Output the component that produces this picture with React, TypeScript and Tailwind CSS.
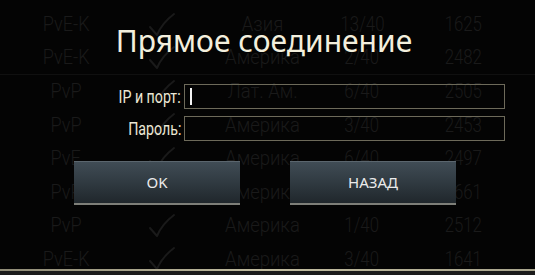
import React from "react";

const rows = [
  ["PvE-K", "Азия", "13/40", "1625"],
  ["PvE-K", "Америка", "2/40", "2482"],
  ["PvP", "Лат. Ам.", "6/40", "2505"],
  ["PvP", "Америка", "3/40", "2453"],
  ["PvE", "Америка", "6/40", "2497"],
  ["PvP", "Америка", "5/40", "1661"],
  ["PvP", "Америка", "1/40", "2512"],
  ["PvE-K", "Америка", "3/40", "1641"],
];

function Check() {
  return (
    <svg width="28" height="26" viewBox="0 0 28 26" fill="none">
      <path d="M2 15 L9 23 Q14 11 26 2" stroke="#1a1a1a" strokeWidth="2" strokeLinecap="round" strokeLinejoin="round" />
    </svg>
  );
}

function Btn({ label }: { label: string }) {
  return (
    <div className="w-[166px] h-[44px] flex items-center justify-center border-t border-t-[#5b666e] border-b-2 border-b-[#7e7f79] bg-gradient-to-b from-[#404c55] via-[#303a41] to-[#20272c] text-[15px] text-[#ebebeb] [font-family:'Noto_Sans',sans-serif]">
      {label}
    </div>
  );
}

export default function App() {
  return (
    <div className="relative w-[535px] h-[275px] overflow-hidden bg-[#040404]">
      <div className="h-[269px] overflow-hidden pt-[8px] text-[21px] font-light text-[#1a1a1a] [font-family:Roboto,sans-serif]">
        {rows.map((r, i) => (
          <div
            key={i}
            className={`flex h-[33.5px] items-center ${i === 1 ? "border-b border-b-[#101010]" : ""}`}
          >
            <div className="w-[138px] flex justify-center"><span className="scale-x-[0.86]">{r[0]}</span></div>
            <div className="w-[64px] flex justify-center"><Check /></div>
            <div className="w-[146px] flex justify-center"><span className="scale-x-[0.88]">{r[1]}</span></div>
            <div className="w-[62px] flex justify-center"><span className="scale-x-[0.8]">{r[2]}</span></div>
            <div className="w-[150px] flex justify-center"><span className="scale-x-[0.8]">{r[3]}</span></div>
          </div>
        ))}
      </div>
      <div className="h-[2px] bg-gradient-to-r from-[#8f8b76] via-[#c2bda0] to-[#a9a58d]" />
      <div className="h-[4px] bg-[#1b1b1b]" />

      <div className="absolute inset-0 flex flex-col">
        <div className="mt-[26px] pr-[7px] text-center text-[30px] leading-[30px] text-[#f3efdd] [font-family:'Noto_Sans',sans-serif]">
          Прямое соединение
        </div>
        <div className="mt-[27px] flex flex-col gap-[5px] pl-[85px]">
          <div className="flex items-center">
            <div className="w-[99px] pr-[3px] flex justify-end text-[18px] text-[#ebe7d5] [font-family:Roboto,sans-serif]">
              <span className="origin-right scale-x-[0.79] whitespace-nowrap">IP и порт:</span>
            </div>
            <div className="w-[321px] h-[25px] border border-[#6d6a5a] flex items-center pl-[5px]">
              <div className="w-[2px] h-[17px] bg-[#f4f4f4]" />
            </div>
          </div>
          <div className="flex items-center">
            <div className="w-[99px] pr-[3px] flex justify-end text-[18px] text-[#ebe7d5] [font-family:Roboto,sans-serif]">
              <span className="origin-right scale-x-[0.79] whitespace-nowrap">Пароль:</span>
            </div>
            <div className="w-[321px] h-[25px] border border-[#6d6a5a]" />
          </div>
        </div>
        <div className="mt-[19px] pl-[74px] flex gap-[50px]">
          <Btn label="OK" />
          <Btn label="НАЗАД" />
        </div>
      </div>
    </div>
  );
}
